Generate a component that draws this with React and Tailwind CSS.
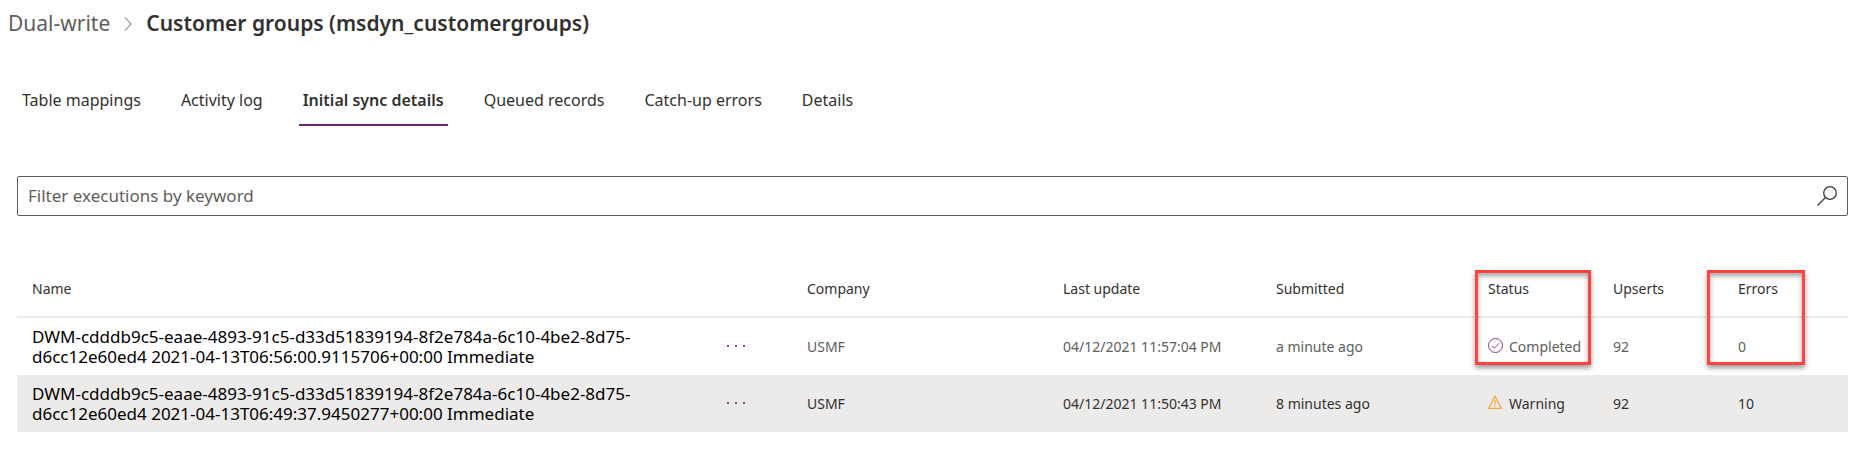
import React from "react";

const tabs = [
  "Table mappings",
  "Activity log",
  "Initial sync details",
  "Queued records",
  "Catch-up errors",
  "Details",
];

const rows = [
  {
    name: "DWM-cdddb9c5-eaae-4893-91c5-d33d51839194-8f2e784a-6c10-4be2-8d75-d6cc12e60ed4 2021-04-13T06:56:00.9115706+00:00 Immediate",
    company: "USMF",
    updated: "04/12/2021 11:57:04 PM",
    submitted: "a minute ago",
    status: "Completed",
    upserts: 92,
    errors: 0,
  },
  {
    name: "DWM-cdddb9c5-eaae-4893-91c5-d33d51839194-8f2e784a-6c10-4be2-8d75-d6cc12e60ed4 2021-04-13T06:49:37.9450277+00:00 Immediate",
    company: "USMF",
    updated: "04/12/2021 11:50:43 PM",
    submitted: "8 minutes ago",
    status: "Warning",
    upserts: 92,
    errors: 10,
    selected: true,
  },
];

function ChevronIcon() {
  return (
    <svg className="h-4 w-2" viewBox="0 0 8 16" fill="none" stroke="#605e5c" aria-hidden="true">
      <path d="M0.7 1.3 7.2 8 0.7 14.7" />
    </svg>
  );
}

function SearchIcon() {
  return (
    <svg className="h-5 w-5" viewBox="0 0 20 20" fill="none" stroke="#3b3a39" strokeWidth="1.3" aria-hidden="true">
      <circle cx="13" cy="7" r="6.3" />
      <path d="M8.5 11.5 0.5 19.5" />
    </svg>
  );
}

function StatusIcon({ status }) {
  if (status === "Completed") {
    return (
      <svg className="h-[17px] w-4" viewBox="0 0 16 17" fill="none" stroke="#8a3f8f" aria-hidden="true">
        <circle cx="7.5" cy="7.5" r="7" />
        <path d="M4 7.7 6.4 10.1 11.2 5.3" />
      </svg>
    );
  }
  return (
    <svg className="h-[17px] w-4" viewBox="0 0 16 17" fill="none" stroke="#faa83c" strokeWidth="1.3" aria-hidden="true">
      <path d="M7 1.3 13.3 13.4H0.7Z" />
      <path d="M7 5v4.6M7 10.5v1.5" />
    </svg>
  );
}

function MoreIcon() {
  return (
    <svg className="h-[15px] w-5" viewBox="0 0 20 15" fill="#8a3f8f" aria-hidden="true">
      <path d="M1 6h2v2H1zM9 6h2v2H9zM17 6h2v2h-2z" />
    </svg>
  );
}

function Highlight({ className }) {
  return (
    <span
      aria-hidden="true"
      className={`pointer-events-none absolute top-3 z-10 h-[95px] border-3 border-[#ff4343] shadow-[0_3px_5px_rgba(0,0,0,0.4),inset_0_3px_5px_rgba(0,0,0,0.35)] ${className}`}
    />
  );
}

export default function App() {
  return (
    <div className="bg-white pb-4 font-['Noto_Sans','Open_Sans',sans-serif] text-[#323130]">
      <nav aria-label="Breadcrumb" className="flex h-12 items-center gap-[14px] px-2 text-[21px]">
        <a href="#dual-write" className="text-[#605e5c]">Dual-write</a>
        <ChevronIcon />
        <h1 className="font-semibold">Customer groups (msdyn_customergroups)</h1>
      </nav>

      <div role="tablist" className="mt-6 flex gap-8 px-[18px] text-[16px]">
        {tabs.map((tab) => {
          const active = tab === "Initial sync details";
          return (
            <button
              key={tab}
              type="button"
              role="tab"
              aria-selected={active}
              className={`h-[54px] border-b-2 px-1 pt-[3px] ${active ? "border-[#742774] font-semibold" : "border-transparent"}`}
            >
              {tab}
            </button>
          );
        })}
      </div>

      <main className="mr-[14px] ml-[17px]">
        <label className="mt-[50px] flex h-10 items-center rounded-xs border border-[#605e5c] px-[10px]">
          <input
            type="text"
            aria-label="Filter executions by keyword"
            placeholder="Filter executions by keyword"
            className="min-w-0 flex-1 text-[17px] outline-none placeholder:text-[#605e5c]"
          />
          <SearchIcon />
        </label>

        <table className="mt-[42px] w-full table-fixed border-separate border-spacing-0 text-left text-[14px] leading-[21px]">
          <thead>
            <tr className="h-[60px] [&>th]:border-b-2 [&>th]:border-[#edebe9] [&>th]:px-[15px] [&>th]:pt-[2px] [&>th]:font-normal">
              <th>Name</th>
              <th aria-label="Actions" className="w-[81px]" />
              <th className="w-[256px]">Company</th>
              <th className="w-[213px]">Last update</th>
              <th className="w-[212px]">Submitted</th>
              <th className="relative w-[125px]">
                Status
                <Highlight className="left-[2px] w-[116px]" />
              </th>
              <th className="w-[125px]">Upserts</th>
              <th className="relative w-[125px]">
                Errors
                <Highlight className="-left-4 w-[98px]" />
              </th>
            </tr>
          </thead>
          <tbody>
            {rows.map((row) => (
              <tr
                key={row.name}
                className={`h-[57px] [&>td]:px-[15px] ${row.selected ? "bg-[#edebe9] text-[#323130]" : "text-[#605e5c]"}`}
              >
                <td className="text-[17px] leading-5 text-black">{row.name}</td>
                <td>
                  <button type="button" aria-label="More actions" className="flex"><MoreIcon /></button>
                </td>
                <td>{row.company}</td>
                <td>{row.updated}</td>
                <td>{row.submitted}</td>
                <td>
                  <span className="flex items-center gap-[5px]">
                    <StatusIcon status={row.status} />
                    {row.status}
                  </span>
                </td>
                <td>{row.upserts}</td>
                <td>{row.errors}</td>
              </tr>
            ))}
          </tbody>
        </table>
      </main>
    </div>
  );
}
